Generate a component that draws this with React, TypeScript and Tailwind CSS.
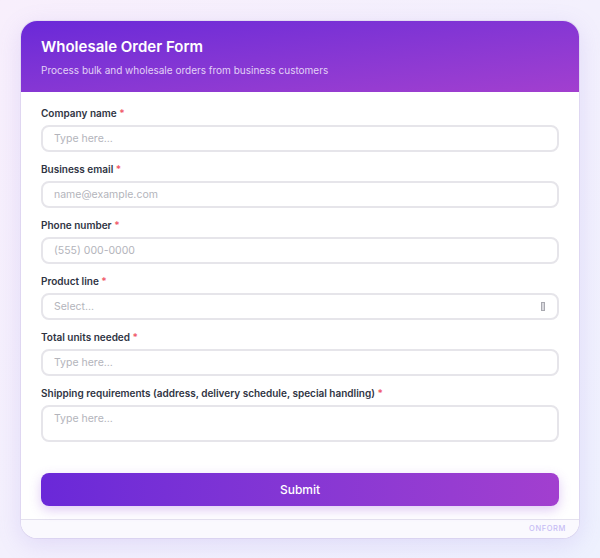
import React from "react";

const fields = [
  { label: "Company name", placeholder: "Type here..." },
  { label: "Business email", placeholder: "name@example.com" },
  { label: "Phone number", placeholder: "(555) 000-0000" },
];

function Label({ text }: { text: string }) {
  return (
    <div className="text-[10px] leading-[14px] font-semibold text-[#2f3443]">
      {text} <span className="text-[#f05a6a]">*</span>
    </div>
  );
}

function App() {
  return (
    <div
      className="min-h-[558px] w-full bg-gradient-to-br from-[#f8effc] to-[#eef1fe] p-[21px]"
      style={{ fontFamily: "Inter, 'Noto Sans', sans-serif" }}
    >
      <div className="rounded-2xl overflow-hidden bg-white shadow-[0_6px_24px_rgba(140,110,220,0.18),0_0_0_1px_rgba(225,220,240,0.7)]">
        <div className="bg-gradient-to-br from-[#6a28d8] to-[#a23fcf] px-5 pt-[16px] pb-[15px]">
          <div className="text-[15px] leading-[20px] font-semibold text-white">
            Wholesale Order Form
          </div>
          <div className="mt-[6px] text-[10px] leading-[14px] text-[#e2d2f6]">
            Process bulk and wholesale orders from business customers
          </div>
        </div>

        <div className="px-5 pt-[14px]">
          {fields.map((f) => (
            <div key={f.label} className="mb-[10px]">
              <Label text={f.label} />
              <input
                type="text"
                placeholder={f.placeholder}
                className="mt-[5px] block w-full h-[27px] rounded-lg border-2 border-[#e6e5ea] px-[11px] text-[10.5px] placeholder:text-[#b3b4bb] outline-none"
              />
            </div>
          ))}

          <div className="mb-[10px]">
            <Label text="Product line" />
            <div className="mt-[5px] flex items-center justify-between h-[27px] rounded-lg border-2 border-[#e6e5ea] px-[11px] text-[10.5px] text-[#b3b4bb]">
              <span>Select...</span>
              <span className="mr-[1px] h-[9px] w-[4px] border border-[#a9a9b0] bg-[#d9d9de]" />
            </div>
          </div>

          <div className="mb-[10px]">
            <Label text="Total units needed" />
            <input
              type="text"
              placeholder="Type here..."
              className="mt-[5px] block w-full h-[27px] rounded-lg border-2 border-[#e6e5ea] px-[11px] text-[10.5px] placeholder:text-[#b3b4bb] outline-none"
            />
          </div>

          <div>
            <Label text="Shipping requirements (address, delivery schedule, special handling)" />
            <textarea
              placeholder="Type here..."
              className="mt-[5px] block w-full h-[37px] resize-none rounded-lg border-2 border-[#e6e5ea] px-[11px] py-[5px] text-[10.5px] leading-[14px] placeholder:text-[#b3b4bb] outline-none"
            />
          </div>

          <button className="mt-[31px] mb-[13px] w-full h-[33px] rounded-lg bg-gradient-to-r from-[#6a28d8] to-[#a23fcf] text-white text-[12px] font-medium shadow-[0_4px_12px_rgba(150,80,220,0.3)]">
            Submit
          </button>
        </div>

        <div className="border-t border-[#e4e1ee] bg-[#faf9fe] h-[19px] flex items-center justify-end px-[13px]">
          <span className="text-[7.5px] tracking-[0.08em] font-medium text-[#c7bdf5]">
            ONFORM
          </span>
        </div>
      </div>
    </div>
  );
}

export default App;
